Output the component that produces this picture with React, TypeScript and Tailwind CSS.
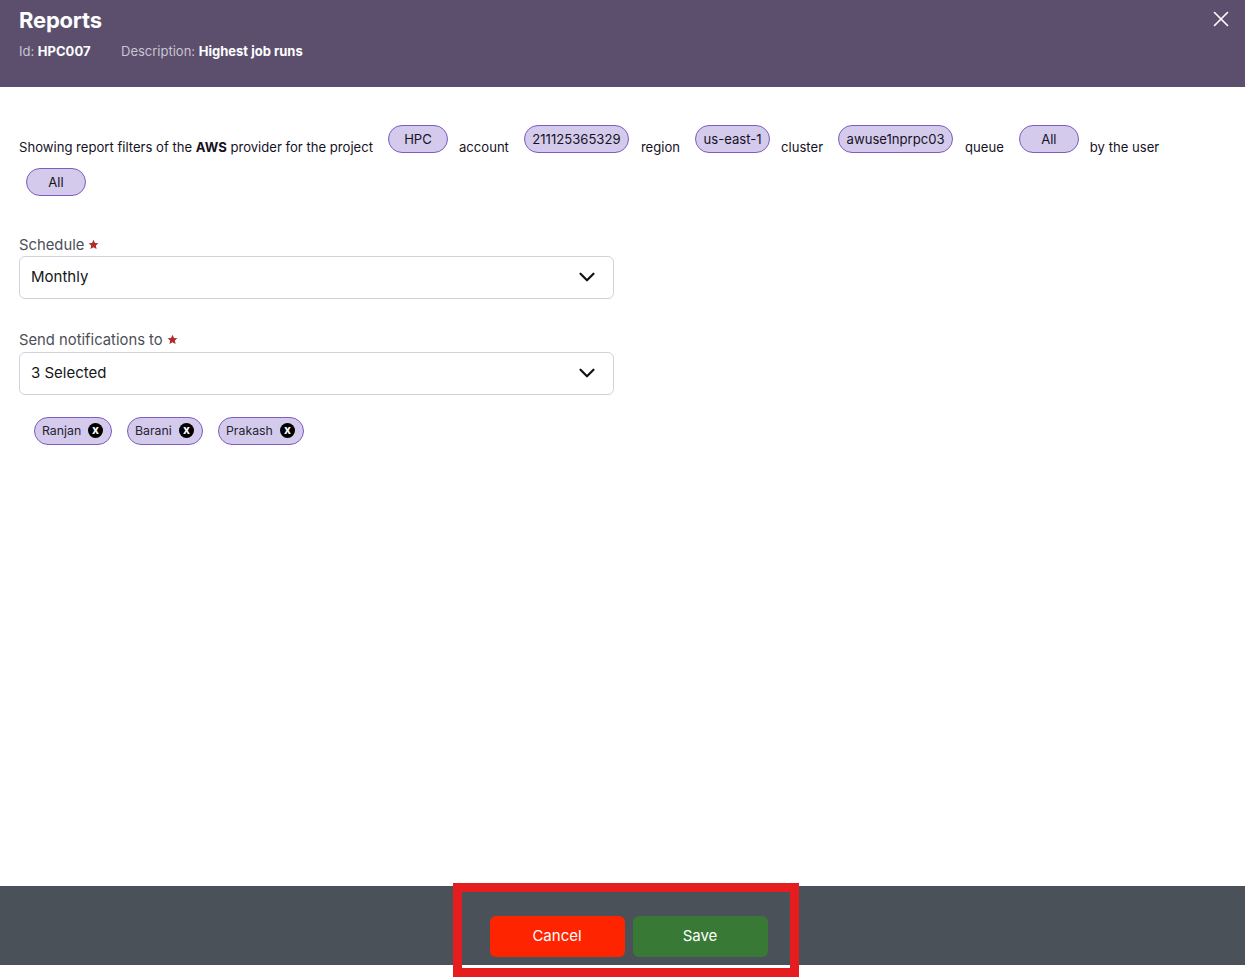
import React from "react";
import { X, ChevronDown } from "lucide-react";

const INTER = "font-['Inter',sans-serif]";

function Pill({ children, cls }: { children: React.ReactNode; cls: string }) {
  return (
    <span className={`inline-flex h-[28px] items-center justify-center rounded-[14px] border border-[#7e5cc0] bg-[#d4caec] pt-[1px] text-[13.1px] leading-none text-[#16121f] align-[8px] ${cls}`}>
      {children}
    </span>
  );
}

function Star() {
  return (
    <svg viewBox="0 0 24 24" className="ml-[4px] inline-block h-[11px] w-[11px] fill-[#b02a2a] align-[0px]">
      <path d="M12 1.5l3.2 7 7.6.8-5.7 5.1 1.6 7.5L12 18l-6.700 3.900 1.600-7.500L1.200 9.300l7.600-.8z" />
    </svg>
  );
}

function Select({ value }: { value: string }) {
  return (
    <div className="flex h-[43px] w-[595px] items-center justify-between rounded-[6px] border border-[#d0d3dc] bg-white pl-[11px] pr-[13px] text-[15px] text-[#16161a]">
      <span>{value}</span>
      <ChevronDown size={26} strokeWidth={2} className="text-[#111]" />
    </div>
  );
}

function Chip({ name, cls }: { name: string; cls: string }) {
  return (
    <span className={`flex h-[28px] items-center justify-between rounded-[14px] border border-[#7e5cc0] bg-[#d4caec] pl-[7px] pr-[8px] text-[12.3px] text-[#1f2430] ${cls}`}>
      <span>{name}</span>
      <span className="flex h-[15px] w-[15px] items-center justify-center rounded-full bg-black pb-[1px] text-[12px] font-bold leading-none text-white">x</span>
    </span>
  );
}

export default function App() {
  return (
    <div className={`relative flex h-[978px] w-[1245px] flex-col overflow-hidden bg-white ${INTER}`}>
      <header className="relative h-[87px] shrink-0 bg-[#5c4f6e] pl-[19px]">
        <h1 className="pt-[6px] text-[22px] font-bold leading-[29px] tracking-[-0.2px] text-white">Reports</h1>
        <div className="mt-[8px] flex text-[13px] leading-[17px] text-[#c9c5d0]">
          <span className="w-[102px]">Id: <b className="text-white">HPC007</b></span>
          <span>Description: <b className="text-white">Highest job runs</b></span>
        </div>
        <button className="absolute right-[11px] top-[6px] text-white">
          <X size={26} strokeWidth={1.5} />
        </button>
      </header>

      <main className="flex-1 pl-[19px]">
        <div className="mt-[38px] w-[1190px] text-[13.1px] leading-[28px] text-[#16121f]">
          <span className="mr-[15px]">Showing report filters of the <b>AWS</b> provider for the project</span>
          <Pill cls="w-[60px]">HPC</Pill>
          <span className="mx-[11px]">account</span>
          <Pill cls="mx-[4px] w-[105px]">211125365329</Pill>
          <span className="mx-[8px]">region</span>
          <Pill cls="mx-[7px] w-[75px]">us-east-1</Pill>
          <span className="mx-[4px]">cluster</span>
          <Pill cls="ml-[11px] mr-[12px] w-[115px]">awuse1nprpc03</Pill>
          <span className="mr-[3px]">queue</span>
          <Pill cls="ml-[12px] mr-[11px] w-[60px]">All</Pill>
          <span>by the user</span>
          <div className="mt-[7px] flex pl-[7px]">
            <Pill cls="w-[60px]">All</Pill>
          </div>
        </div>

        <label className="mt-[40px] block text-[14.8px] leading-[18px] text-[#4b4f58]">Schedule<Star /></label>
        <div className="mt-[2px]"><Select value="Monthly" /></div>
        <label className="mt-[32px] block text-[14.8px] leading-[18px] text-[#4b4f58]">Send notifications to<Star /></label>
        <div className="mt-[3px]"><Select value="3 Selected" /></div>

        <div className="ml-[15px] mt-[22px] flex gap-[15px]">
          <Chip name="Ranjan" cls="w-[78px]" />
          <Chip name="Barani" cls="w-[76px]" />
          <Chip name="Prakash" cls="w-[86px]" />
        </div>
      </main>

      <footer className="mb-[13px] flex h-[79px] shrink-0 justify-center gap-[8px] bg-[#4a5159] pl-[12px] pt-[30px]">
        <button className="h-[41px] w-[135px] rounded-[6px] bg-[#ff2400] text-[15px] text-white">Cancel</button>
        <button className="h-[41px] w-[135px] rounded-[6px] bg-[#387a35] text-[15px] text-white">Save</button>
      </footer>

      <div className="pointer-events-none absolute left-[453px] top-[883px] h-[94px] w-[346px] border-[9px] border-[#e51d1f]" />
    </div>
  );
}
